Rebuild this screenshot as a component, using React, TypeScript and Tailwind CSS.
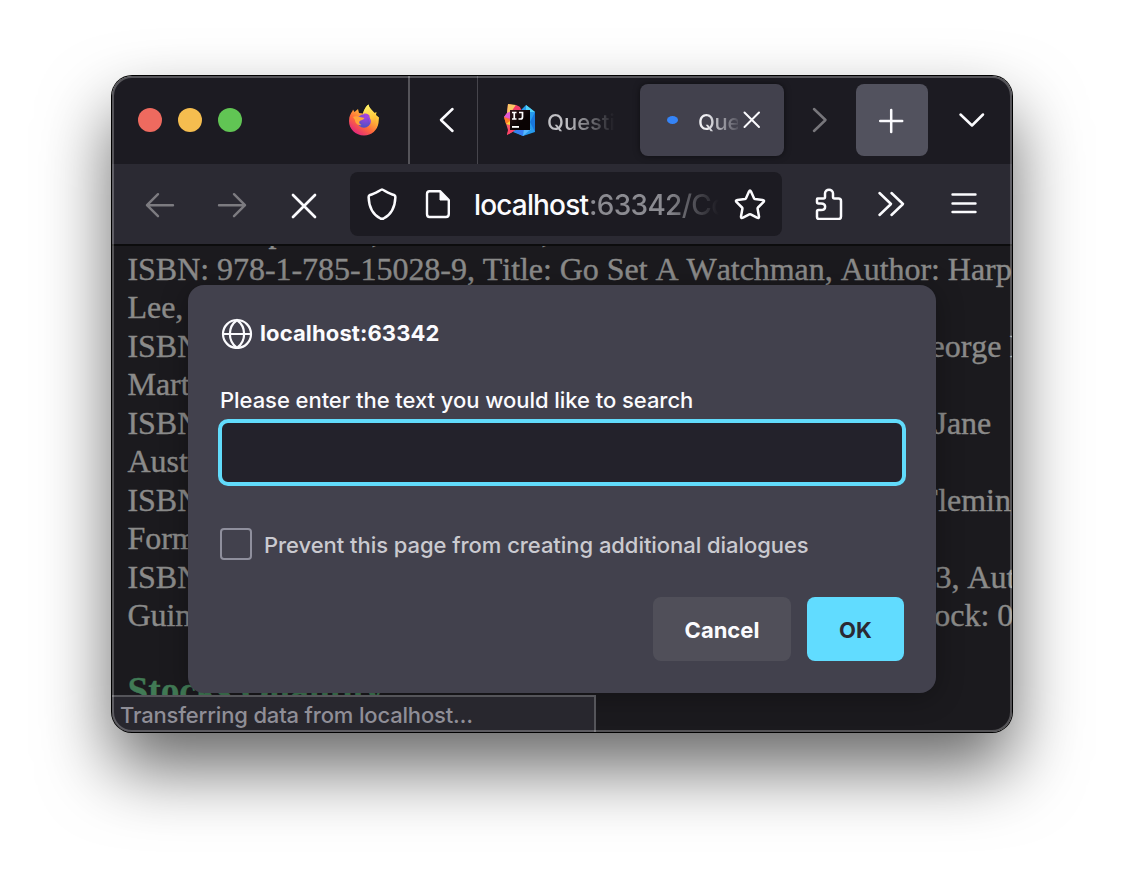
import React from 'react';

const UI = "font-['Inter','Liberation_Sans',sans-serif]";

const lines: { text: string; tail?: string; tailX?: number }[] = [
  { text: 'ISBN: 978-1-785-15028-9, Title: Go Set A Watchman, Author: Harper' },
  { text: 'Lee,' },
  { text: 'ISBN:', tail: 'George R', tailX: 780 },
  { text: 'Martin' },
  { text: 'ISBN:', tail: 'Jane', tailX: 807 },
  { text: 'Austen' },
  { text: 'ISBN:', tail: 'Fleming', tailX: 793 },
  { text: 'Format' },
  { text: 'ISBN:', tail: '3, Auth', tailX: 808 },
  { text: 'Guin', tail: 'tock: 0', tailX: 798 },
];

function Firefox() {
  return (
    <svg width="32" height="32" viewBox="0 0 32 32">
      <defs>
        <linearGradient id="ffBody" x1="0.85" y1="0.1" x2="0.25" y2="0.95">
          <stop offset="0" stopColor="#fff04a" />
          <stop offset="0.35" stopColor="#ffb238" />
          <stop offset="0.65" stopColor="#ff6b3a" />
          <stop offset="1" stopColor="#e3287b" />
        </linearGradient>
        <radialGradient id="ffGlobe" cx="0.6" cy="0.2" r="0.8">
          <stop offset="0" stopColor="#a543e0" />
          <stop offset="1" stopColor="#4d50c4" />
        </radialGradient>
        <linearGradient id="ffTail" x1="0.4" y1="0" x2="0.6" y2="1">
          <stop offset="0" stopColor="#fff36a" />
          <stop offset="0.6" stopColor="#ffc53a" />
          <stop offset="1" stopColor="#ff8a35" stopOpacity="0" />
        </linearGradient>
      </defs>
      <path d="M1 17C1 12 3 9 4.500 7L5 5.500L6.500 8L10 5L11 9L15 9.500C16 6 18 2 20.500 0.500C21 4 24 6 26.500 9L28.500 8L28 11L31 13.500L30.500 19C29.500 26 23.500 31.500 16 31.500C7.500 31.500 1 25 1 17Z" fill="url(#ffBody)" />
      <path d="M15 9.500C16 6 18 2 20.500 0.500C21 4 24 6 26.500 9C30 14 28 21 23 25C25 18 23 12 15 9.500Z" fill="url(#ffTail)" />
      <circle cx="16" cy="17" r="6.700" fill="url(#ffGlobe)" />
      <path d="M5 13C7 11.500 10 12.500 12 13L16.500 14C15.500 16 13.500 16 12.500 16.500C10.500 17.500 11 20 13.500 21C10 22 7 19 7 16Z" fill="#ffa43a" />
      <path d="M16 9.500C19 9 21.500 10.500 22 12.500L20 12.500C22 14 23.500 17 22 20C22 15 19 12.500 16 11Z" fill="#a643df" />
    </svg>
  );
}

function IntelliJ() {
  return (
    <svg width="32" height="32" viewBox="0 0 32 32">
      <defs>
        <linearGradient id="ijDark" x1="0" y1="0" x2="1" y2="1">
          <stop offset="0" stopColor="#31191d" />
          <stop offset="0.6" stopColor="#0a0303" />
        </linearGradient>
      </defs>
      <path d="M4 0L14 2L20 9L14 25L3 31L4 26L0 13L3 9Z" fill="#f6586a" />
      <path d="M4 0L12 1L8 8L3 9Z" fill="#fbc765" />
      <path d="M12 1L16 3L18 8L7 8Z" fill="#f43c68" />
      <path d="M3 9L8 7L8 15L0 13Z" fill="#df5ad2" />
      <path d="M0 13L6 16L6 20L2 20Z" fill="#ff7b22" />
      <path d="M2 20L6 17L6 21Z" fill="#ffd33b" />
      <path d="M5 24L13 25L3 31Z" fill="#ff4268" />
      <path d="M17 6L22 1L31 8L31 28L19 32L9 28L15 24Z" fill="#279bed" />
      <path d="M22 1L31 8L22 8Z" fill="#52d2f7" />
      <path d="M31 8L26 18L31 28Z" fill="#1877dc" />
      <path d="M9 27L20 25L19 32Z" fill="#397ef2" />
      <path d="M19 32L20 25L27 25Z" fill="#58b7ff" />
      <rect x="6" y="6" width="20" height="20" fill="url(#ijDark)" />
      <path d="M8 8.500H12.500M10.250 8.500V15M8 15H12.500M15 8.500H18.500V13Q18.500 15 16.500 15H14.500" stroke="#fff" strokeWidth="1.700" fill="none" />
      <rect x="8" y="22" width="7" height="1.800" fill="#fff" />
    </svg>
  );
}

type IconProps = { d: string; w?: number; h?: number; color?: string; sw?: number };

function Stroke({ d, w = 32, h = 32, color = '#fbfbfe', sw = 2.5 }: IconProps) {
  return (
    <svg width={w} height={h} viewBox={`0 0 ${w} ${h}`} fill="none" stroke={color} strokeWidth={sw} strokeLinecap="round" strokeLinejoin="round" className="shrink-0">
      <path d={d} />
    </svg>
  );
}

function TabStrip() {
  return (
    <div className="flex h-[88px] shrink-0 bg-[#1c1b22]">
      <div className="flex w-[298px] items-center border-r-2 border-[#55545a] pl-[26px]">
        <div className="flex gap-4">
          <span className="size-6 rounded-full bg-[#ee6a5f]" />
          <span className="size-6 rounded-full bg-[#f5bd4f]" />
          <span className="size-6 rounded-full bg-[#61c554]" />
        </div>
        <div className="ml-[106px]"><Firefox /></div>
      </div>
      <div className="flex w-[68px] items-center justify-center border-r border-[#46454c] pl-[6px]">
        <Stroke d="M21.500 5L10 16L21.500 27" />
      </div>
      <div className="flex w-[162px] items-center pl-[26px]">
        <IntelliJ />
        <span className="ml-[11px] mt-1 w-[68px] overflow-hidden whitespace-nowrap bg-linear-to-r from-[#c0c0c4] from-30% to-transparent bg-clip-text text-[22px] font-medium text-transparent">Questi</span>
      </div>
      <div className="mt-2 flex h-[72px] w-36 items-center rounded-lg bg-[#42414d] pl-[27px] shadow-[0_0_6px_rgba(0,0,0,0.5)]">
        <span className="h-2 w-[11px] rounded-[50%] bg-[#3584f7]" />
        <span className="ml-[20px] mt-1 w-[40px] overflow-hidden whitespace-nowrap bg-linear-to-r from-[#efeff3] from-20% to-[#efeff3]/10 bg-clip-text text-[22px] font-medium tracking-[-0.3px] text-transparent">Que</span>
        <div className="-ml-[2px]"><Stroke w={32} h={32} d="M8.500 8.500L23 23M23 8.500L8.500 23" sw={2} /></div>
      </div>
      <div className="flex w-[72px] items-center justify-center">
        <Stroke d="M10 5L21.500 16L10 27" color="#77767b" />
      </div>
      <div className="mt-2 flex size-[72px] items-center justify-center rounded-lg bg-[#52525e]">
        <Stroke d="M15.200 6V28M4.200 17H26.200" />
      </div>
      <div className="flex w-[84px] items-center justify-center pl-1">
        <Stroke d="M4.500 10.500L16 21.500L27 10.500" />
      </div>
    </div>
  );
}

function Toolbar() {
  return (
    <div className="flex h-[82px] shrink-0 border-b-2 border-[#0c0c0d] bg-[#2b2a33]">
      <div className="flex w-[238px] items-center pl-[32px]">
        <Stroke d="M3 17.200H29M14 6.200L3 17.200L14 28.200" color="#7c7b80" sw={2.4} />
        <div className="ml-[40px]"><Stroke d="M3 17.200H29M18 6.200L29 17.200L18 28.200" color="#7c7b80" sw={2.4} /></div>
        <div className="ml-[40px]"><Stroke d="M5 7L27 29M27 7L5 29" sw={2.7} /></div>
      </div>
      <div className="mt-2 flex h-16 w-[432px] items-center rounded-lg bg-[#1c1b22] pl-4">
        <Stroke d="M16 1.500C15 1.500 9 5.500 4 7C3 7.400 2.600 8 2.600 9C3 20 7.500 27 14.500 30.500Q16 31.200 17.500 30.500C24.500 27 29 20 29.400 9C29.400 8 29 7.400 28 7C23 5.500 17 1.500 16 1.500Z" />
        <svg width="32" height="32" viewBox="0 0 32 32" className="ml-6">
          <path d="M7.500 3.200H18L26.800 12V26Q26.800 29 24 29H7.500Q5 29 5 26V6Q5 3.200 7.500 3.200Z" fill="none" stroke="#fbfbfe" strokeWidth="2.400" strokeLinejoin="round" />
          <path d="M18 3.200L26.800 12H18Z" fill="#fbfbfe" stroke="#fbfbfe" strokeWidth="1" />
        </svg>
        <div className="ml-5 mt-[2px] flex w-[245px] overflow-hidden whitespace-nowrap text-[28px] font-medium">
          <span className="w-[115px] shrink-0 tracking-[-0.85px] text-[#fbfbfe]">localhost</span>
          <span className="w-[130px] shrink-0 overflow-hidden bg-linear-to-r from-[#8b8b91] from-60% to-transparent bg-clip-text tracking-[-0.7px] text-transparent">:63342/Co</span>
        </div>
        <div className="ml-[15px]">
          <Stroke d="M15 3.500Q16 1.500 17 3.500L20 10.200Q20.300 10.800 21 11L28.500 12Q31 12.400 29.400 14.200L24 19.500Q23.500 20 23.600 20.800L25 28.400Q25.200 30.700 23 29.700L16.700 26.300Q16 26 15.300 26.300L9 29.700Q6.800 30.700 7 28.400L8.400 20.800Q8.500 20 8 19.500L2.600 14.200Q1 12.400 3.500 12L11 11Q11.700 10.800 12 10.200Z" />
        </div>
      </div>
      <div className="flex items-center pl-[31px]">
        <Stroke d="M4.500 10.500H10.500Q12 10.500 12 9V5.500C12 .5 20 .5 20 5.500V9Q20 10.500 21.500 10.500H25.500Q28 10.500 28 13V28.500Q28 31 25.500 31H6Q4 31 4 29V23.500Q4 22 5.500 22H8C13.500 22 13.500 15.500 8 15.500H5.500Q4 15.500 4 14V11.500Q4 10.500 4.500 10.500Z" />
        <div className="ml-[30px]"><Stroke d="M4.500 5L16 16L4.500 27M16.500 5L28 16L16.500 27" /></div>
        <div className="ml-[41px]"><Stroke d="M4.500 6.500H27.500M4.500 15.500H27.500M4.500 24H27.500" sw={2.4} /></div>
      </div>
    </div>
  );
}

function PageContent() {
  return (
    <div className="relative h-[486px] overflow-hidden bg-[#1b1a1e] pl-[15.500px] font-['Liberation_Serif',serif] text-[32px] leading-[38.5px] tracking-[-0.045px] text-[#8b8b8a] [-webkit-text-stroke:0.4px_#8b8b8a] [font-kerning:none]">
      <div className="-mt-[34px] flex h-[37.5px] whitespace-pre">
        <span className="ml-[141px]">p</span>
        <span className="ml-[87px]">,</span>
        <span className="ml-[162px]">,</span>
      </div>
      {lines.map((line, i) => (
        <div key={i} className="flex h-[38.5px] whitespace-nowrap">
          <span className="shrink-0" style={line.tail ? { width: line.tailX } : undefined}>{line.text}</span>
          {line.tail && <span className="shrink-0">{line.tail}</span>}
        </div>
      ))}
      <h3 className="mt-[34px] whitespace-nowrap text-[37.44px] font-bold leading-[44px] text-[#417a55] [-webkit-text-stroke:0.3px_#417a55]">Stocks Quantity:</h3>
    </div>
  );
}

function Prompt() {
  return (
    <div className={`absolute left-[76px] top-[209px] flex h-[408px] w-[748px] flex-col rounded-2xl bg-[#42414d] px-8 shadow-[0_4px_28px_rgba(0,0,0,0.3)] ${UI}`}>
      <div className="mt-8 flex h-8 items-center gap-[7px]">
        <svg width="33" height="32" viewBox="0 0 33 32" fill="none" stroke="#fbfbfe" strokeWidth="2.200">
          <circle cx="17" cy="17" r="14" />
          <path d="M3 17H31M17 3C7.500 10 7.500 24 17 31C26.500 24 26.500 10 17 3Z" />
        </svg>
        <span className="text-[22px] font-bold tracking-[0.12px] text-[#fbfbfe]">localhost:63342</span>
      </div>
      <div className="mt-[35px] h-8 whitespace-nowrap text-[22px] font-medium leading-8 tracking-[-0.05px] text-[#fbfbfe]">Please enter the text you would like to search</div>
      <div className="-mx-0.5 mt-[3px] h-[67px] rounded-[10px] border-4 border-[#61dbfb] bg-[#23222b]" />
      <div className="mt-[42px] flex h-8 items-center gap-3">
        <span className="size-8 shrink-0 rounded border-2 border-[#8f8f9d]" />
        <span className="mt-[2px] whitespace-nowrap text-[22px] font-medium tracking-[-0.05px] text-[#cacad0]">Prevent this page from creating additional dialogues</span>
      </div>
      <div className="mt-[37px] flex h-16 justify-end gap-4">
        <button className="w-[138px] rounded-lg bg-[#504f59] pt-[2px] text-[22px] font-bold text-[#fbfbfe]">Cancel</button>
        <button className="w-[97px] rounded-lg bg-[#61dcff] pt-[2px] text-[22px] font-bold text-[#2b2a33]">OK</button>
      </div>
    </div>
  );
}

export default function App() {
  return (
    <div className="h-[880px] w-[1124px] overflow-hidden bg-white pl-[112px] pt-[76px]">
      <div className="h-[656px] w-[900px] rounded-[20px] shadow-[0_0_0_1px_#000,0_36px_70px_rgba(0,0,0,0.6)]">
        <div className={`relative flex h-full flex-col overflow-hidden rounded-[20px] ${UI}`}>
          <TabStrip />
          <Toolbar />
          <PageContent />
          <Prompt />
          <div className="absolute bottom-0 left-0 flex h-[37px] w-[484px] items-center border-r-2 border-t-2 border-[#55555a] bg-[#28272e] pl-2 pt-[2px] text-[22px] font-medium tracking-[-0.17px] text-[#8f8e97]">
            <span className="whitespace-nowrap">Transferring data from localhost…</span>
          </div>
          <div className="pointer-events-none absolute inset-0 rounded-[20px] border-2 border-white/25" />
        </div>
      </div>
    </div>
  );
}
